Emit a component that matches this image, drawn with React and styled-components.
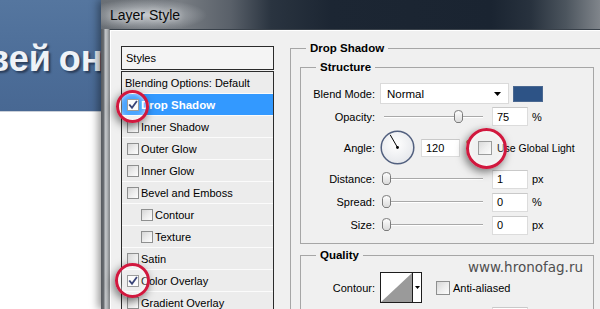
import React from 'react';
import styled, { createGlobalStyle } from 'styled-components';

const Global = createGlobalStyle`
  html, body { margin: 0; padding: 0; background: #fff; }
  body { font-family: "Liberation Sans", Arial, sans-serif; font-size: 11px; color: #000; }
`;

const Page = styled.div`
  position: relative;
  width: 600px;
  height: 309px;
  overflow: hidden;
  display: flex;
  background: #fff;
`;

const Backdrop = styled.div`
  width: 101px;
  flex-shrink: 0;
  display: flex;
  flex-direction: column;
`;

const Banner = styled.div`
  height: 112px;
  box-sizing: border-box;
  padding-top: 41px;
  overflow: hidden;
  background: linear-gradient(180deg, #55769f 0%, #4c6d98 60%, #486893 100%);
  border-bottom: 1px solid #c9cfd8;
`;

const BannerText = styled.div`
  font: bold 36px/36px "Liberation Sans", Arial, sans-serif;
  color: #eef2f7;
  white-space: nowrap;
  word-spacing: -2px;
  margin-left: -13px;
  text-shadow: 2px 2px 2px rgba(20, 30, 50, 0.6);
`;

const Dialog = styled.div`
  position: relative;
  z-index: 1;
  flex: 1;
  min-width: 0;
  display: flex;
  flex-direction: column;
  box-shadow: -3px 0 8px rgba(0, 0, 0, 0.4);
`;

const TitleBar = styled.div`
  height: 29px;
  flex-shrink: 0;
  display: flex;
  align-items: center;
  padding-left: 9px;
  background:
    radial-gradient(ellipse 62px 16px at 44px 15px, rgba(205, 209, 213, 0.9), rgba(205, 209, 213, 0)),
    linear-gradient(90deg, #6a6f75 0px, #777c82 80px, #596069 130px, #2a3440 170px, #1c2633 230px,
      #1a2431 390px, #28323e 430px, #4c555e 465px, #80858b 499px);
`;

const Title = styled.span`
  font-family: "Liberation Sans", Arial, sans-serif;
  font-size: 14px;
  color: #0a0a0a;
  text-shadow: 0 0 6px rgba(255, 255, 255, 0.7);
`;

const Frame = styled.div`
  flex: 1;
  display: flex;
  min-height: 0;
`;

const FrameEdge = styled.div`
  width: 8px;
  flex-shrink: 0;
  background: linear-gradient(90deg, #55595e 0, #6d7176 3px, #c2c5c8 4px, #b4b7ba 6px, #8b8e91 8px);
`;

const Body = styled.div`
  flex: 1;
  min-width: 0;
  display: flex;
  align-items: flex-start;
  gap: 16px;
  padding-left: 11px;
  background: #f0f0f0;
  border-top: 1px solid #39414a;
  border-left: 1px solid #8a8d90;
  box-shadow: inset 1px 1px 0 #fff;
`;

const StylesColumn = styled.div`
  width: 153px;
  flex-shrink: 0;
  margin-top: 16px;
  display: flex;
  flex-direction: column;
`;

const StylesHeader = styled.div`
  height: 22px;
  border: 1px solid #2b2b2b;
  padding-left: 4px;
  display: flex;
  align-items: center;
  background: #f4f4f4;
  font-size: 11px;
`;

const StyleList = styled.div`
  margin-top: 1px;
  border: 1px solid #2b2b2b;
  border-bottom: none;
  display: flex;
  flex-direction: column;
`;

const StyleRow = styled.div`
  height: 21px;
  border-bottom: 1px solid #fbfbfb;
  display: flex;
  align-items: center;
  gap: 2px;
  padding-left: ${(p) => p.$indent}px;
  background: ${(p) => (p.$selected ? '#3399ff' : '#ececec')};
  color: ${(p) => (p.$selected ? '#fff' : '#000')};
  font-weight: ${(p) => (p.$selected ? 'bold' : 'normal')};
  font-size: ${(p) => (p.$selected ? '11.5px' : '11px')};
  white-space: nowrap;
`;

const Box = styled.span`
  width: ${(p) => p.$size}px;
  height: ${(p) => p.$size}px;
  box-sizing: border-box;
  flex-shrink: 0;
  border: 1px solid #8e8f8f;
  background: ${(p) =>
    p.$checked ? '#fcfcfc' : 'linear-gradient(135deg, #d6d6d6 0%, #ececec 50%, #fdfdfd 100%)'};
  display: inline-flex;
  align-items: center;
  justify-content: center;
`;

function Checkbox({ checked, size = 12 }) {
  return (
    <Box $size={size} $checked={checked}>
      {checked && (
        <svg width={size - 2} height={size - 2} viewBox="0 0 10 10">
          <path d="M1.8 5.2 L4 7.8 L8.4 1.8" fill="none" stroke="#1f2c66" strokeWidth="1.8" strokeLinecap="square" />
        </svg>
      )}
    </Box>
  );
}

const RightColumn = styled.div`
  width: 315px;
  flex-shrink: 0;
  margin-top: 11px;
`;

const Group = styled.fieldset`
  margin: ${(p) => p.$mt || 0}px 0 0 0;
  padding: 0;
  min-width: 0;
  border: 1px solid #a6a6a6;
`;

const Legend = styled.legend`
  margin-left: 15px;
  padding: 0 4px;
  font: bold 11.5px/14px "Liberation Sans", Arial, sans-serif;
  color: #000;
`;

const GroupInner = styled.div`
  padding: 5px 10px 0 9px;
`;

const Rows = styled.div`
  display: flex;
  flex-direction: column;
  gap: 3px;
  padding: ${(p) => p.$pad};
`;

const Row = styled.div`
  position: relative;
  height: ${(p) => p.$h}px;
  display: flex;
  align-items: center;
  white-space: nowrap;
`;

const Label = styled.span`
  width: 74px;
  flex-shrink: 0;
  margin-right: 5px;
  text-align: right;
  font-size: 11px;
`;

const Select = styled.div`
  width: 129px;
  height: 21px;
  box-sizing: border-box;
  flex-shrink: 0;
  background: #fff;
  border: 1px solid #dadada;
  display: flex;
  align-items: center;
  justify-content: space-between;
  padding: 0 7px 0 6px;
  font-size: 11.5px;
`;

const Swatch = styled.div`
  width: 30px;
  height: 16px;
  box-sizing: border-box;
  margin-left: 4px;
  background: #2d5386;
  border: 1px solid #4a6891;
`;

const SliderBox = styled.div`
  position: relative;
  width: 104px;
  height: 100%;
  flex-shrink: 0;
`;

const Track = styled.div`
  position: absolute;
  left: 4px;
  right: 1px;
  top: 50%;
  height: 2px;
  margin-top: -1px;
  box-sizing: border-box;
  border-top: 1px solid #a9a9a9;
  border-bottom: 1px solid #fff;
`;

const Thumb = styled.svg`
  position: absolute;
  top: 50%;
  margin-top: -7px;
  width: 9px;
  height: 13px;
`;

function Slider({ pct }) {
  return (
    <SliderBox>
      <Track />
      <Thumb viewBox="0 0 9 13" style={{ left: `${2 + (pct * 96) / 100}px` }}>
        <defs>
          <linearGradient id="thumbFill" x1="0" y1="0" x2="0" y2="1">
            <stop offset="0" stopColor="#ffffff" />
            <stop offset="1" stopColor="#d9d9d9" />
          </linearGradient>
        </defs>
        <path d="M0.5 3.5 Q0.5 0.5 4.5 0.5 Q8.5 0.5 8.5 3.5 V10 L6.5 12.5 H2.5 L0.5 10 Z" fill="url(#thumbFill)" stroke="#7b7b7b" strokeWidth="1" />
      </Thumb>
    </SliderBox>
  );
}

const NumInput = styled.div`
  width: ${(p) => p.$w || 36}px;
  height: ${(p) => p.$h || 19}px;
  box-sizing: border-box;
  flex-shrink: 0;
  margin-left: ${(p) => (p.$ml === undefined ? 8 : p.$ml)}px;
  background: #fff;
  border: 1px solid #dcdcdc;
  border-top-color: #c9c9c9;
  display: flex;
  align-items: center;
  padding-left: 4px;
  font-size: 11px;
`;

const Unit = styled.span`
  margin-left: 4px;
  font-size: 11px;
`;

const Degree = styled.span`
  align-self: flex-start;
  margin: 10px 0 0 6px;
  font-size: 10px;
`;

const CheckLabel = styled.label`
  display: flex;
  align-items: center;
  gap: ${(p) => p.$gap || 4}px;
  margin-left: ${(p) => p.$ml}px;
  font-size: ${(p) => p.$fs || 11}px;
`;

const Dial = styled.svg`
  width: 35px;
  height: 35px;
  flex-shrink: 0;
`;

const ContourPicker = styled.div`
  width: 42px;
  height: 31px;
  box-sizing: border-box;
  flex-shrink: 0;
  border: 1px solid #1d1d1d;
  background: #fff;
  display: flex;
`;

const ContourPreview = styled.svg`
  width: 31px;
  height: 29px;
  display: block;
`;

const ContourArrow = styled.div`
  flex: 1;
  border-left: 1px solid #1d1d1d;
  display: flex;
  align-items: center;
  justify-content: center;
`;

const Watermark = styled.span`
  position: absolute;
  right: 10px;
  top: -13px;
  font: 13.5px/16px "DejaVu Sans", Verdana, sans-serif;
  color: #4f4f4f;
`;

const Ring = styled.div`
  position: absolute;
  box-sizing: border-box;
  border-radius: 50%;
  border: 3px solid #d1183e;
  background: rgba(255, 255, 255, 0.12);
  box-shadow: -2px 3px 9px rgba(0, 0, 0, 0.5), inset 0 0 5px rgba(255, 255, 255, 0.8);
  pointer-events: none;
  z-index: 5;
`;

const DownArrow = ({ w = 7, h = 4 }) => (
  <svg width={w} height={h} viewBox={`0 0 ${w} ${h}`}>
    <path d={`M0 0 H${w} L${w / 2} ${h} Z`} fill="#000" />
  </svg>
);

const styleItems = [
  { name: 'Drop Shadow', checked: true, selected: true },
  { name: 'Inner Shadow' },
  { name: 'Outer Glow' },
  { name: 'Inner Glow' },
  { name: 'Bevel and Emboss' },
  { name: 'Contour', sub: true },
  { name: 'Texture', sub: true },
  { name: 'Satin' },
  { name: 'Color Overlay', checked: true },
  { name: 'Gradient Overlay' },
];

const sliders = [
  { label: 'Distance:', value: '1', unit: 'px', pct: 0 },
  { label: 'Spread:', value: '0', unit: '%', pct: 0 },
  { label: 'Size:', value: '0', unit: 'px', pct: 0 },
];

const rings = [
  { x: 116, y: 90, s: 33 },
  { x: 115, y: 263, s: 35 },
  { x: 466, y: 128, s: 41 },
];

export default function App() {
  return (
    <>
      <Global />
      <Page>
        <Backdrop>
          <Banner>
            <BannerText>вей он</BannerText>
          </Banner>
        </Backdrop>
        <Dialog>
          <TitleBar>
            <Title>Layer Style</Title>
          </TitleBar>
          <Frame>
            <FrameEdge />
            <Body>
              <StylesColumn>
                <StylesHeader>Styles</StylesHeader>
                <StyleList>
                  <StyleRow $indent={3}>Blending Options: Default</StyleRow>
                  {styleItems.map((it) => (
                    <StyleRow key={it.name} $indent={it.sub ? 19 : 5} $selected={it.selected}>
                      <Checkbox checked={it.checked} />
                      <span>{it.name}</span>
                    </StyleRow>
                  ))}
                </StyleList>
              </StylesColumn>
              <RightColumn>
                <Group>
                  <Legend>Drop Shadow</Legend>
                  <GroupInner>
                    <Group>
                      <Legend>Structure</Legend>
                      <Rows $pad="9px 0 8px 0">
                        <Row $h={21}>
                          <Label>Blend Mode:</Label>
                          <Select>
                            <span>Normal</span>
                            <DownArrow />
                          </Select>
                          <Swatch />
                        </Row>
                        <Row $h={19}>
                          <Label>Opacity:</Label>
                          <Slider pct={75} />
                          <NumInput>75</NumInput>
                          <Unit>%</Unit>
                        </Row>
                        <Row $h={37}>
                          <Label>Angle:</Label>
                          <Dial viewBox="0 0 35 35">
                            <defs>
                              <radialGradient id="dialFill" cx="0.45" cy="0.4" r="0.6">
                                <stop offset="0" stopColor="#ffffff" />
                                <stop offset="1" stopColor="#e6e8ec" />
                              </radialGradient>
                            </defs>
                            <circle cx="17.5" cy="17.5" r="16.3" fill="url(#dialFill)" stroke="#52607f" strokeWidth="1.5" />
                            <line x1="17.5" y1="17.5" x2="10.2" y2="4.8" stroke="#000" strokeWidth="1" />
                            <circle cx="17.5" cy="17.5" r="1.4" fill="#000" />
                          </Dial>
                          <NumInput $w={39} $h={18} $ml={6}>120</NumInput>
                          <Degree>°</Degree>
                          <CheckLabel $ml={8} $gap={5} $fs={10.5}>
                            <Checkbox size={14} />
                            <span>Use Global Light</span>
                          </CheckLabel>
                        </Row>
                        {sliders.map((s) => (
                          <Row key={s.label} $h={20}>
                            <Label>{s.label}</Label>
                            <Slider pct={s.pct} />
                            <NumInput $h={19}>{s.value}</NumInput>
                            <Unit>{s.unit}</Unit>
                          </Row>
                        ))}
                      </Rows>
                    </Group>
                    <Group $mt={4}>
                      <Legend>Quality</Legend>
                      <Rows $pad="10px 0 0 0">
                        <Row $h={31}>
                          <Watermark>www.hronofag.ru</Watermark>
                          <Label>Contour:</Label>
                          <ContourPicker>
                            <ContourPreview viewBox="0 0 31 29">
                              <polygon points="0,29 31,0 31,29" fill="#9a9a9a" />
                            </ContourPreview>
                            <ContourArrow>
                              <DownArrow w={5} h={3} />
                            </ContourArrow>
                          </ContourPicker>
                          <CheckLabel $ml={14} $gap={3}>
                            <Checkbox size={14} />
                            <span>Anti-aliased</span>
                          </CheckLabel>
                        </Row>
                        <Row $h={20}>
                          <Label />
                          <SliderBox />
                          <NumInput $h={19} />
                        </Row>
                      </Rows>
                    </Group>
                  </GroupInner>
                </Group>
              </RightColumn>
            </Body>
          </Frame>
        </Dialog>
        {rings.map((r, i) => (
          <Ring key={i} style={{ left: r.x, top: r.y, width: r.s, height: r.s }} />
        ))}
      </Page>
    </>
  );
}
